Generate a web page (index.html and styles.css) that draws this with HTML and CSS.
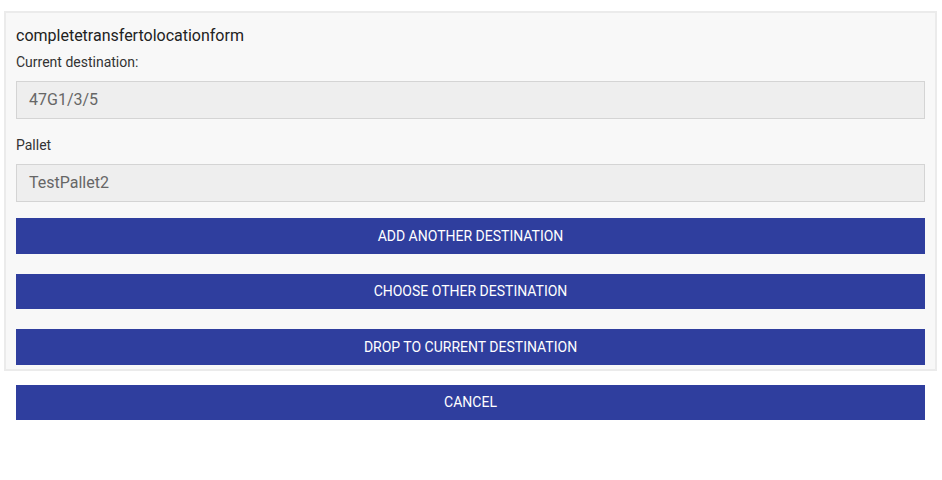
FILE: index.html
```html
<!DOCTYPE html>
<html>
<head>
<meta charset="utf-8">
<link rel="stylesheet" href="styles.css">
</head>
<body>
<div class="page">
  <form class="panel">
    <div class="title">completetransfertolocationform</div>
    <label class="label first">Current destination:</label>
    <div class="field">47G1/3/5</div>
    <label class="label">Pallet</label>
    <div class="field">TestPallet2</div>
    <div class="actions">
      <button type="button" class="btn">Add another destination</button>
      <button type="button" class="btn">Choose other destination</button>
      <button type="button" class="btn">Drop to current destination</button>
    </div>
  </form>
  <div class="footer">
    <button type="button" class="btn cancel">Cancel</button>
  </div>
</div>
</body>
</html>
```
FILE: styles.css
```css
html, body {
  margin: 0;
  padding: 0;
  background: #ffffff;
}
body {
  font-family: Roboto, "Liberation Sans", sans-serif;
  width: 942px;
  height: 480px;
  overflow: hidden;
}
.page {
  padding: 11px 5px 0 4px;
}
.panel {
  display: flex;
  flex-direction: column;
  background: #f8f8f8;
  border: 2px solid #ebebeb;
  padding: 13px 10px 4px 10px;
  margin: 0;
}
.title {
  font-size: 16px;
  line-height: 19px;
  color: #222222;
}
.label {
  display: block;
  font-size: 14px;
  line-height: 16px;
  color: #333333;
  margin-top: 18px;
}
.label.first {
  margin-top: 9px;
}
.field {
  margin-top: 11px;
  height: 36px;
  border: 1px solid #d4d4d4;
  background: #eeeeee;
  padding: 0 12px;
  font-size: 16px;
  line-height: 36px;
  color: #666666;
}
.actions {
  display: flex;
  flex-direction: column;
  gap: 20px;
  margin-top: 16px;
}
.btn {
  display: block;
  width: 100%;
  height: 35.5px;
  border: 0;
  margin: 0;
  padding: 0;
  background: #2f3e9e;
  color: #ffffff;
  font-family: Roboto, "Liberation Sans", sans-serif;
  font-size: 14px;
  text-transform: uppercase;
  text-align: center;
  cursor: pointer;
}
.footer {
  padding: 14px 12px 0 12px;
}
.cancel {
  height: 35px;
}
```
